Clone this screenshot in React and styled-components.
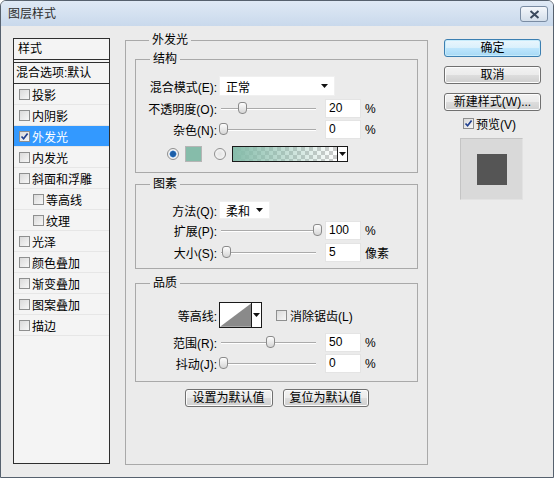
import styled, { createGlobalStyle } from "styled-components";

const GlobalStyle = createGlobalStyle`
  html, body {
    margin: 0;
    padding: 0;
    background: #ffffff;
  }
  body {
    font-family: "Liberation Sans", "Noto Sans CJK SC", sans-serif;
    font-size: 12px;
    color: #000;
  }
`;

const effects = [
  { label: "投影" },
  { label: "内阴影" },
  { label: "外发光", checked: true, selected: true },
  { label: "内发光" },
  { label: "斜面和浮雕" },
  { label: "等高线", indent: true },
  { label: "纹理", indent: true },
  { label: "光泽" },
  { label: "颜色叠加" },
  { label: "渐变叠加" },
  { label: "图案叠加" },
  { label: "描边" },
];

function CheckBox({ checked }) {
  return (
    <Box>
      {checked && (
        <svg width="9" height="9" viewBox="0 0 9 9">
          <path d="M1.5 4.5 L3.6 6.8 L7.6 1.6" fill="none" stroke="#1f3f8f" strokeWidth="1.7" />
        </svg>
      )}
    </Box>
  );
}

function Slider({ value }) {
  return (
    <SliderWrap>
      <Track />
      <Thumb style={{ left: `${(value / 100) * 94}px` }} />
    </SliderWrap>
  );
}

function Arrow() {
  return (
    <svg width="7" height="4" viewBox="0 0 7 4">
      <path d="M0 0 H7 L3.5 4 Z" fill="#111" />
    </svg>
  );
}

function SliderRow({ label, value, num, unit = "%", top }) {
  return (
    <Row $h={19} $top={top}>
      <Label>{label}</Label>
      <Slider value={value} />
      <NumInput>{num}</NumInput>
      <Unit>{unit}</Unit>
    </Row>
  );
}

export default function App() {
  return (
    <>
      <GlobalStyle />
      <Window>
        <TitleBar>
          <Title>图层样式</Title>
          <CloseButton>
            <svg width="11" height="9" viewBox="0 0 11 9">
              <path d="M1.5 1 L9.5 8 M9.5 1 L1.5 8" stroke="#3b4a5e" strokeWidth="2" />
            </svg>
          </CloseButton>
        </TitleBar>
        <Body>
          <StyleList>
            <ListHeader>样式</ListHeader>
            <BlendRow>混合选项:默认</BlendRow>
            {effects.map((e) => (
              <EffectRow key={e.label} $selected={e.selected} $indent={e.indent}>
                <CheckBox checked={e.checked} />
                <span>{e.label}</span>
              </EffectRow>
            ))}
          </StyleList>

          <MainGroup>
            <Legend>外发光</Legend>
            <MainInner>
              <Group>
                <Legend>结构</Legend>
                <GroupBody $pt={9} $pb={10}>
                  <Row $h={20}>
                    <Label>混合模式(E):</Label>
                    <Select $w={116}>
                      <span>正常</span>
                      <Arrow />
                    </Select>
                  </Row>
                  <SliderRow label="不透明度(O):" value={20} num="20" top={3} />
                  <SliderRow label="杂色(N):" value={0} num="0" top={2} />
                  <ColorRow>
                    <Radio $on />
                    <Swatch />
                    <Radio />
                    <GradientPick>
                      <GradientFill />
                      <DropArrow>
                        <Arrow />
                      </DropArrow>
                    </GradientPick>
                  </ColorRow>
                </GroupBody>
              </Group>

              <Group $mt={3}>
                <Legend>图素</Legend>
                <GroupBody $pt={9} $pb={6}>
                  <Row $h={18}>
                    <Label>方法(Q):</Label>
                    <Select $w={51}>
                      <span>柔和</span>
                      <Arrow />
                    </Select>
                  </Row>
                  <SliderRow label="扩展(P):" value={100} num="100" top={2} />
                  <SliderRow label="大小(S):" value={3} num="5" unit="像素" top={3} />
                </GroupBody>
              </Group>

              <Group $mt={6}>
                <Legend>品质</Legend>
                <GroupBody $pt={11} $pb={8}>
                  <Row $h={26}>
                    <Label>等高线:</Label>
                    <Contour>
                      <ContourCurve>
                        <svg width="32" height="24" viewBox="0 0 32 24">
                          <path d="M0 24 L32 0 L32 24 Z" fill="#8a8a8a" />
                        </svg>
                      </ContourCurve>
                      <DropArrow>
                        <Arrow />
                      </DropArrow>
                    </Contour>
                    <AntiAlias>
                      <CheckBox />
                      <span>消除锯齿(L)</span>
                    </AntiAlias>
                  </Row>
                  <SliderRow label="范围(R):" value={50} num="50" top={5} />
                  <SliderRow label="抖动(J):" value={0} num="0" top={2} />
                </GroupBody>
              </Group>

              <DefaultButtons>
                <Button $w={88}>设置为默认值</Button>
                <Button $w={86}>复位为默认值</Button>
              </DefaultButtons>
            </MainInner>
          </MainGroup>

          <SideColumn>
            <Button $w={97} $primary>确定</Button>
            <Button $w={97}>取消</Button>
            <Button $w={97}>新建样式(W)...</Button>
            <PreviewToggle>
              <CheckBox checked />
              <span>预览(V)</span>
            </PreviewToggle>
            <PreviewBox>
              <PreviewSquare />
            </PreviewBox>
          </SideColumn>
        </Body>
      </Window>
    </>
  );
}

const Window = styled.div`
  width: 554px;
  height: 478px;
  box-sizing: border-box;
  border: 1px solid #56616e;
  border-radius: 6px 6px 0 0;
  background: #ebebeb;
  display: flex;
  flex-direction: column;
  overflow: hidden;
`;

const TitleBar = styled.div`
  height: 25px;
  flex-shrink: 0;
  display: flex;
  align-items: center;
  justify-content: space-between;
  padding: 0 5px 0 7px;
  background: linear-gradient(#dfe9f5, #c9d9ec);
`;

const Title = styled.div`
  font-size: 12px;
  color: #2d2d2d;
  margin-top: -2px;
`;

const CloseButton = styled.div`
  width: 28px;
  height: 16px;
  box-sizing: border-box;
  border: 1px solid #7a8ca3;
  border-radius: 3px;
  background: linear-gradient(#f4f7fb, #d3deea);
  display: flex;
  align-items: center;
  justify-content: center;
  margin-top: 1px;
`;

const Body = styled.div`
  flex: 1;
  display: flex;
  align-items: flex-start;
  padding: 6px 0 0 12px;
`;

const StyleList = styled.div`
  width: 97px;
  height: 426px;
  margin-top: 6px;
  box-sizing: border-box;
  border: 1px solid #2e2e2e;
  background: #f4f4f4;
  display: flex;
  flex-direction: column;
`;

const ListHeader = styled.div`
  height: 21px;
  box-sizing: border-box;
  border-bottom: 1px solid #2e2e2e;
  padding-left: 4px;
  line-height: 20px;
`;

const BlendRow = styled.div`
  height: 22px;
  margin-top: 2px;
  box-sizing: border-box;
  border-top: 1px solid #2e2e2e;
  border-bottom: 1px solid #2e2e2e;
  padding-left: 2px;
  line-height: 20px;
`;

const EffectRow = styled.div`
  height: 21px;
  box-sizing: border-box;
  border-bottom: 1px solid #e6e6e6;
  display: flex;
  align-items: center;
  gap: 2px;
  padding-left: ${(p) => (p.$indent ? 19 : 5)}px;
  background: ${(p) => (p.$selected ? "#3399ff" : "transparent")};
  color: ${(p) => (p.$selected ? "#ffffff" : "#000000")};
`;

const Box = styled.span`
  width: 11px;
  height: 11px;
  box-sizing: border-box;
  flex-shrink: 0;
  border: 1px solid #8e8f8f;
  background: linear-gradient(135deg, #dadada, #f7f7f7);
  display: inline-flex;
  align-items: center;
  justify-content: center;
`;

const MainGroup = styled.fieldset`
  width: 303px;
  height: 433px;
  box-sizing: border-box;
  margin: 0 0 0 15px;
  padding: 3px 9px 0;
  border: 1px solid #a9a9a9;
  min-width: 0;
`;

const Legend = styled.legend`
  margin-left: 14px;
  padding: 0 3px;
  font-size: 12px;
  line-height: 16px;
  height: 16px;
`;

const MainInner = styled.div`
  display: flex;
  flex-direction: column;
`;

const Group = styled.fieldset`
  margin: ${(p) => p.$mt || 0}px 0 0;
  padding: 0;
  border: 1px solid #a9a9a9;
  min-width: 0;
`;

const GroupBody = styled.div`
  display: flex;
  flex-direction: column;
  padding: ${(p) => p.$pt}px 0 ${(p) => p.$pb}px;
`;

const Row = styled.div`
  height: ${(p) => p.$h}px;
  margin-top: ${(p) => p.$top || 0}px;
  display: flex;
  align-items: center;
`;

const Label = styled.div`
  width: 81px;
  margin-right: 2px;
  text-align: right;
  white-space: nowrap;
`;

const Select = styled.div`
  width: ${(p) => p.$w}px;
  height: 100%;
  box-sizing: border-box;
  background: #ffffff;
  border: 1px solid #f0f0f0;
  display: flex;
  align-items: center;
  justify-content: space-between;
  padding: 0 6px 0 6px;
`;

const SliderWrap = styled.div`
  position: relative;
  width: 103px;
  height: 100%;
`;

const Track = styled.div`
  position: absolute;
  left: 2px;
  right: 6px;
  top: 9px;
  height: 1px;
  background: #aaaaaa;
  border-bottom: 1px solid #ffffff;
`;

const Thumb = styled.div`
  position: absolute;
  top: 3px;
  width: 9px;
  height: 12px;
  box-sizing: border-box;
  border: 1px solid #8a8a8a;
  border-radius: 3px 3px 4px 4px;
  background: linear-gradient(#fdfdfd, #d6d6d6);
`;

const NumInput = styled.div`
  width: 36px;
  height: 19px;
  margin-left: 3px;
  box-sizing: border-box;
  background: #ffffff;
  border: 1px solid #e4e4e4;
  padding-left: 3px;
  line-height: 17px;
`;

const Unit = styled.div`
  margin-left: 4px;
`;

const ColorRow = styled.div`
  height: 16px;
  margin-top: 7px;
  padding-left: 31px;
  display: flex;
  align-items: center;
`;

const Radio = styled.span`
  width: 12px;
  height: 12px;
  box-sizing: border-box;
  border-radius: 50%;
  border: 1px solid #8f8f8f;
  margin-right: 6px;
  background: ${(p) =>
    p.$on
      ? "radial-gradient(circle, #1d5fa8 0 2.5px, #5b9be0 3.2px, #f2f2f2 3.8px)"
      : "radial-gradient(circle, #e4e4e4, #fafafa)"};
`;

const Swatch = styled.span`
  width: 17px;
  height: 16px;
  box-sizing: border-box;
  border: 1px solid #b5b5b5;
  background: #86bcaa;
  margin-right: 12px;
`;

const GradientPick = styled.div`
  display: flex;
  height: 16px;
`;

const GradientFill = styled.div`
  width: 106px;
  height: 100%;
  box-sizing: border-box;
  border: 1px solid #1a1a1a;
  background: linear-gradient(to right, #86bcaa, rgba(134, 188, 170, 0)),
    repeating-conic-gradient(#cccccc 0 25%, #ffffff 0 50%) 0 0 / 8px 8px;
`;

const DropArrow = styled.div`
  width: 10px;
  height: 100%;
  box-sizing: border-box;
  border: 1px solid #1a1a1a;
  border-left: none;
  background: #ffffff;
  display: flex;
  align-items: center;
  justify-content: center;
`;

const Contour = styled.div`
  display: flex;
  height: 26px;
`;

const ContourCurve = styled.div`
  width: 33px;
  height: 100%;
  box-sizing: border-box;
  border: 1px solid #1a1a1a;
  background: #ffffff;
  display: flex;
`;

const AntiAlias = styled.div`
  display: flex;
  align-items: center;
  gap: 3px;
  margin-left: 14px;
`;

const DefaultButtons = styled.div`
  display: flex;
  justify-content: center;
  gap: 10px;
  margin-top: 7px;
`;

const Button = styled.div`
  width: ${(p) => p.$w}px;
  height: 18px;
  box-sizing: border-box;
  border: 1px solid ${(p) => (p.$primary ? "#3c7fb1" : "#707070")};
  border-radius: 3px;
  background: ${(p) =>
    p.$primary
      ? "linear-gradient(#eaf6fd, #d9f0fc 50%, #bee6fd 51%, #a7d9f5)"
      : "linear-gradient(#f2f2f2, #ebebeb 50%, #dddddd 51%, #cfcfcf)"};
  box-shadow: ${(p) => (p.$primary ? "inset 0 0 0 1px #c6ebfb" : "inset 0 0 0 1px #fcfcfc")};
  display: flex;
  align-items: center;
  justify-content: center;
  white-space: nowrap;
  line-height: 16px;
`;

const SideColumn = styled.div`
  margin: 7px 0 0 16px;
  width: 97px;
  display: flex;
  flex-direction: column;
  gap: 9px;
`;

const PreviewToggle = styled.div`
  height: 14px;
  margin-top: -4px;
  padding-left: 19px;
  display: flex;
  align-items: center;
  gap: 2px;
`;

const PreviewBox = styled.div`
  width: 63px;
  height: 62px;
  margin: -1px 0 0 16px;
  box-sizing: border-box;
  border: 1px solid #c4c4c4;
  border-right-color: #e2e2e2;
  border-bottom-color: #e2e2e2;
  background: #d9d9d9;
  display: flex;
  align-items: center;
  justify-content: center;
`;

const PreviewSquare = styled.div`
  width: 30px;
  height: 31px;
  background: #555555;
`;
